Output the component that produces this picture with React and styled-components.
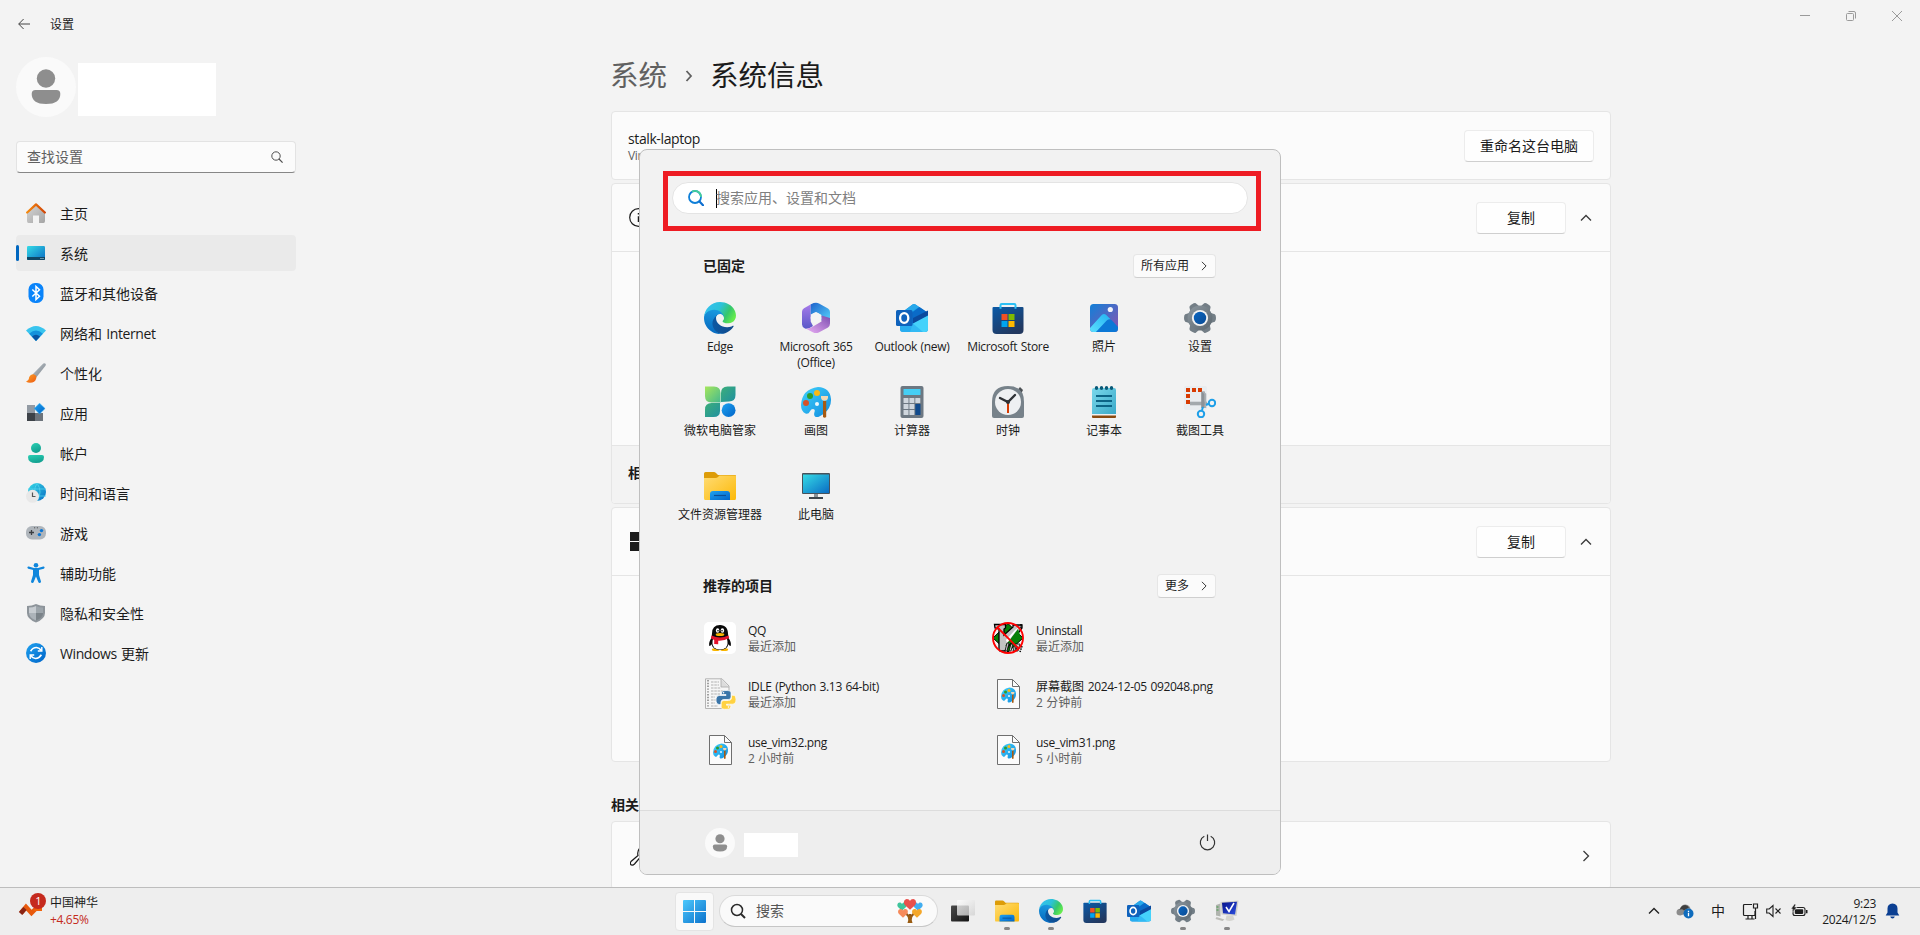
import React from "react";
import styled, { createGlobalStyle, css } from "styled-components";

const GlobalStyle = createGlobalStyle`
  * { box-sizing: border-box; }
  html, body { margin: 0; padding: 0; height: 100%; overflow: hidden; }
  body {
    background: #f3f3f3;
    color: #1b1b1b;
    font-family: "Open Sans", "Noto Sans CJK SC", sans-serif;
    font-size: 14px;
    line-height: 20px;
  }
  svg { display: block; flex: none; }
`;

/* ---------- text ---------- */

const Latin = styled.span`
  letter-spacing: -0.028em;
  word-spacing: 0.07em;
`;

function Mixed({ children }) {
  const runs = String(children).match(/[\x20-\x7e]+|[^\x20-\x7e]+/g) || [];
  return runs.map((run, i) =>
    /[\x20-\x7e]/.test(run[0]) ? <Latin key={i}>{run}</Latin> : run
  );
}

/* ---------- shared icons ---------- */

const Gradients = styled.svg`
  position: absolute;
`;

function Defs() {
  const g = (id, a, b, x1 = 0, y1 = 0, x2 = 1, y2 = 1) => (
    <linearGradient id={id} x1={x1} y1={y1} x2={x2} y2={y2}>
      <stop offset="0" stopColor={a} />
      <stop offset="1" stopColor={b} />
    </linearGradient>
  );
  return (
    <Gradients width="0" height="0">
      <defs>
        {g("edgeDark", "#0c59a4", "#114a8b", 0, 0, 1, 0)}
        {g("edgeMid", "#1b9de2", "#0669bf", 0.6, 0, 0.4, 1)}
        <linearGradient id="edgeTop" x1="0" y1="0.2" x2="1" y2="0.6">
          <stop offset="0" stopColor="#35c1f1" />
          <stop offset="0.45" stopColor="#2cc2d8" />
          <stop offset="0.75" stopColor="#36c76b" />
          <stop offset="1" stopColor="#66eb4e" />
        </linearGradient>
        {g("screen", "#35dbe6", "#0a6cc4")}
        {g("blue", "#1fa2f0", "#0064c8")}
        {g("folder", "#ffdc74", "#fcb908")}
        {g("store", "#0a5aa8", "#22385f", 0, 0, 0.6, 1)}
        {g("gear", "#8d98a0", "#5b666e")}
        {g("gearHub", "#0b66c0", "#0a4b95")}
        {g("orange", "#f58a10", "#d24606", 0, 0, 1, 0)}
        {g("brushTip", "#fba32a", "#ee5a10")}
        {g("grey", "#d6d6d6", "#a4a4a4")}
        {g("teal", "#2ad0b4", "#12a090", 0, 0, 0.4, 1)}
        {g("silver", "#bcc4cb", "#7d858c")}
        {g("win", "#4cc8fc", "#0c72cc")}
        {g("photo", "#1180d8", "#8a52b0")}
        {g("photoHill", "#5fe2ff", "#22b2f2", 0, 1, 1, 0)}
        {g("leafA", "#a6e65c", "#45b98e")}
        {g("leafB", "#3cae7a", "#2090a0")}
        {g("palette", "#42d2fa", "#0f8be0")}
        {g("mA", "#a77bea", "#5a58c8", 0, 0, 0, 1)}
        {g("mB", "#1d62cc", "#58d4fc", 0, 0, 1, 1)}
        {g("mC", "#ecb0f6", "#7c4db0", 0, 1, 1, 0)}
        {g("note", "#7ad8ec", "#3aa9c8")}
        {g("bgTask", "#4a4a4a", "#141414")}
        {g("fgTask", "#ffffff", "#d0d0d0")}
        {g("monitorXp", "#06128a", "#2c50e0")}
      </defs>
    </Gradients>
  );
}

const EdgeIcon = ({ size = 32 }) => (
  <svg width={size} height={size} viewBox="0 0 256 256">
    <path fill="url(#edgeDark)" d="M231.1 190.5c-3.4 1.8-6.9 3.4-10.5 4.7a101.8 101.8 0 0 1-35.9 6.5c-47.3 0-88.5-32.5-88.5-74.3.1-11.4 6.4-21.9 16.4-27.3-42.8 1.8-53.8 46.4-53.8 72.5 0 74 68.1 81.4 82.8 81.4 7.9 0 19.8-2.3 27-4.6l1.3-.4c27.6-9.5 51-28.1 66.6-52.8 1.2-1.9.6-4.3-1.2-5.5-1.3-.8-2.9-.9-4.2-.2z" />
    <path fill="url(#edgeMid)" d="M105.7 241.4c-8.9-5.5-16.6-12.8-22.7-21.3-26.3-36-18.4-86.5 17.6-112.8 3.8-2.7 7.7-5.2 11.9-7.2 3.1-1.5 8.4-4.1 15.5-4 10.1.1 19.6 4.9 25.7 13 4 5.4 6.3 11.9 6.4 18.7 0-.2 24.5-79.6-80-79.6-43.9 0-80 41.7-80 78.2-.2 19.3 4 38.5 12.1 56 27.6 58.8 94.8 87.6 156.4 67.1-21.1 6.6-44.1 3.7-62.9-8.1z" />
    <path fill="url(#edgeTop)" d="M152.3 148.9c-.9 1-3.4 2.5-3.4 5.6 0 2.6 1.7 5.1 4.7 7.2 14.3 10 41.4 8.6 41.5 8.6 10.7 0 21.1-2.9 30.3-8.3 18.8-11 30.4-31.1 30.4-52.9.3-22.4-8-37.3-11.3-43.9C223.5 23.9 177.7.2 128 .2 57.7.2.5 56.7 0 127c.5-36.5 36.8-66 80-66 3.5 0 23.5.3 42 10.1 16.3 8.6 24.9 18.9 30.8 29.2 6.2 10.7 7.3 24.1 7.3 29.5s-2.7 13.3-7.8 19.1z" />
  </svg>
);

const OfficeIcon = () => (
  <svg width="32" height="32" viewBox="0 0 32 32">
    <path fill="url(#mA)" d="M11 2.2 4 6.2Q2 7.400 2 9.800v12.600Q2 25 5 26.500q3 .8 6-1.200l2-1.300-2.300-4.600V3z" />
    <path fill="url(#mB)" d="M11 2.200Q16 -.3 19 1.600l9 5Q30 7.800 30 10v9.500l-8.500-1V13l-5.500-3-5.300 2.600V2.600z" />
    <path fill="url(#mC)" d="M30 16v5.600q0 2.600-2 3.800l-9.200 5q-2.800 1.300-5.600 0L5.600 26.600Q10 27 13 24.600l8.500-5.200V13.500L30 16z" />
    <circle cx="16" cy="16" r="5.400" fill="#f4f4f4" />
  </svg>
);

const OutlookIcon = ({ size = 32 }) => (
  <svg width={size} height={size} viewBox="0 0 32 32">
    <path d="M4 12 16.500 2.600q1.500-1 3 0L32 11v16q0 3-3 3H7q-3 0-3-3z" fill="#1593e4" />
    <path d="M5 11 16.500 2.600q1.500-1 3 0L23 5 10 14z" fill="#28a8ea" />
    <path d="M10 15 23.500 5l8 5.500L17 22z" fill="#0a6bc8" />
    <path d="M17 16 32 8.500V14L17 22z" fill="#0b4a9e" />
    <path d="M17 21.500 32 13.500V27q0 3-3 3H14z" fill="#45d2fb" />
    <path d="M4 23l13-1.500L27 30H7q-3 0-3-3z" fill="#2db4f2" opacity=".8" />
    <rect x="0" y="8" width="16.500" height="16" rx="1.500" fill="#0f62bc" />
    <ellipse cx="8.200" cy="16" rx="4.100" ry="4.800" fill="none" stroke="#fff" strokeWidth="2.300" />
  </svg>
);

const StoreIcon = ({ size = 32 }) => (
  <svg width={size} height={size} viewBox="0 0 32 32">
    <path d="M.500 6q0-1 1-1h29q1 0 1 1v22q0 4-4 4h-23q-4 0-4-4z" fill="url(#store)" />
    <path d="M8.500 6.800V3.200Q8.500 2 9.700 2h12.600q1.200 0 1.200 1.200v3.600" fill="none" stroke="#2cc0f4" strokeWidth="2" />
    <path d="M9.500 12h6v6h-6z" fill="#f25022" />
    <path d="M16.500 12h6v6h-6z" fill="#7fba00" />
    <path d="M9.500 19h6v6h-6z" fill="#00a4ef" />
    <path d="M16.500 19h6v6h-6z" fill="#ffb900" />
  </svg>
);

const PhotosIcon = () => (
  <svg width="32" height="32" viewBox="0 0 32 32">
    <clipPath id="photoClip"><rect x="2" y="2" width="28" height="28" rx="3.500" /></clipPath>
    <g clipPath="url(#photoClip)">
      <rect x="2" y="2" width="28" height="28" fill="url(#photo)" />
      <path d="M6 31 17 19.500l4-2.500q1.500-.5 3 1.500L31 26v6z" fill="#0c78d6" />
      <path d="M1 27 14 12.800q2-1.800 4 0l4.500 4.500q-2-.6-3.800 1.200L7 31H1z" fill="url(#photoHill)" />
    </g>
    <circle cx="22.300" cy="7.500" r="2.600" fill="#f0f2fa" />
  </svg>
);

const SettingsIcon = ({ size = 32 }) => (
  <svg width={size} height={size} viewBox="0 0 32 32">
    <g fill="#737e86">
      {[0, 60, 120, 180, 240, 300].map((a) => (
        <path key={a} transform={`rotate(${a} 16 16)`} d="M24 10l6.800 2.300q1.200.6 1.200 3.700t-1.200 3.700l-6.800 2.300z" />
      ))}
    </g>
    <circle cx="16" cy="16" r="12.400" fill="url(#gear)" />
    <circle cx="16" cy="16" r="8.100" fill="#f2f2f2" />
    <circle cx="16" cy="16" r="6.200" fill="url(#gearHub)" />
  </svg>
);

const PcManagerIcon = () => (
  <svg width="32" height="32" viewBox="0 0 32 32">
    <path d="M1 .500h9q6.500 0 6.500 6.500v9.500h-9Q1 16.500 1 10z" fill="url(#leafA)" />
    <path d="M17 16V7q0-6.500 6.500-6.500H31.500V9q0 6.500-6.500 6.500z" fill="url(#leafB)" />
    <path d="M16 17v8q0 6-6.500 6H1v-7.500Q1 17 7.500 17z" fill="url(#leafB)" />
    <circle cx="24.600" cy="24.200" r="6.900" fill="url(#blue)" />
  </svg>
);

const PaletteArt = () => (
  <>
    <path d="M18 1Q30 1.500 31 13q.5 9-7.500 15-6 4.500-8.500 2.500-1.500-1.200-.5-4.500 1-3-1.500-3-2 0-3 2.200-1.500 3.300-4.500 2.300Q1 25.500 1 19 2 3 18 1z" fill="url(#palette)" />
    <circle cx="6" cy="17" r="3" fill="#d65328" />
    <circle cx="10" cy="10" r="3" fill="#2e9e2c" />
    <circle cx="17" cy="7" r="3" fill="#fbb914" />
    <circle cx="17" cy="18" r="2" fill="#eaf8fe" />
    <path d="M23 15h3.200v16q-1.600 1.500-3.200 0z" fill="#a65a12" />
    <path d="M21 10h7q.5 4.800-3.500 4.800T21 10z" fill="#f1d8b4" />
  </>
);

const PaintIcon = () => (
  <svg width="32" height="32" viewBox="0 0 32 32"><PaletteArt /></svg>
);

const CalculatorIcon = () => (
  <svg width="32" height="32" viewBox="0 0 32 32">
    <rect x="4.500" y="0" width="23" height="32" rx="2" fill="#6d7882" />
    <rect x="7.500" y="3" width="17" height="6" rx=".6" fill="#45cff5" />
    {[7.5, 13.4, 19.3].map((x) =>
      [12, 18, 24].map((y) =>
        x > 19 && y > 12 ? null : (
          <rect key={`${x}-${y}`} x={x} y={y} width="5" height="5" rx=".6" fill="#cfd6dd" />
        )
      )
    )}
    <rect x="19.300" y="18" width="5.200" height="11" rx=".6" fill="#114a8c" />
  </svg>
);

const ClockIcon = () => (
  <svg width="32" height="32" viewBox="0 0 32 32">
    <path d="M26 3.500 28 1l3 3-1.500 3z" fill="#4b5054" />
    <path d="M0 16Q0 0 16 0t16 16v14q0 2-2 2H2q-2 0-2-2z" fill="#77828a" />
    <circle cx="16" cy="16" r="13" fill="#eef0f2" />
    <path d="M8 12l8 4 7-7" fill="none" stroke="#2e3236" strokeWidth="2.400" strokeLinecap="round" />
    <path d="M16 17v10" stroke="#d83b01" strokeWidth="2" />
    <circle cx="16" cy="16" r="2" fill="#2e3236" />
  </svg>
);

const NotepadIcon = () => (
  <svg width="32" height="32" viewBox="0 0 32 32">
    <path d="M4 29h24v2q0 1-1 1H5q-1 0-1-1z" fill="#8a4a10" />
    <path d="M4 26h24v3.500H4z" fill="#f0f0f0" />
    <path d="M4 4q0-2 2-2h20q2 0 2 2v24H4z" fill="url(#note)" />
    <g fill="#0b5a78">
      {[8.500, 13.500, 18.500, 23.500].map((x) => <ellipse key={x} cx={x} cy="2" rx="1.700" ry="2" />)}
    </g>
    <path d="M8 10h16M8 15h16M8 20h16" stroke="#0c6486" strokeWidth="1.800" />
  </svg>
);

const SnipIcon = () => (
  <svg width="32" height="32" viewBox="0 0 32 32">
    <rect x="0" y="0" width="23" height="24" rx="2" fill="#e9edf0" />
    <g fill="#d83b01">
      <path d="M2 2h4v4H2zM8 2h4v4H8zM14 2h4v4h-4zM2 8h4v4H2zM2 14h4v4H2z" />
    </g>
    <path d="M6 17.500h17" stroke="#a3a9ad" strokeWidth="3.600" />
    <path d="M19 5.500V22" stroke="#8c9297" strokeWidth="3.600" />
    <path d="M19 6l2.500 2v14" stroke="#a9afb3" strokeWidth="1.500" fill="none" />
    <path d="m22 19 3-1.500M19 21l-1 3" stroke="#1e9fe8" strokeWidth="2" />
    <circle cx="28" cy="17" r="3.200" fill="none" stroke="#1e9fe8" strokeWidth="2" />
    <circle cx="17" cy="28" r="3.200" fill="none" stroke="#1e9fe8" strokeWidth="2" />
  </svg>
);

const FolderIcon = ({ size = 32 }) => (
  <svg width={size} height={size} viewBox="0 0 32 32">
    <path d="M0 3.500Q0 2 1.500 2H10q1 0 2 1l2 2h17q1 0 1 1v6H0z" fill="#dd9c08" />
    <path d="M0 8h11.500q1.500 0 2.500-1l1.500-1.500H31q1 0 1 1V28q0 2-1 2H1q-1 0-1-2z" fill="url(#folder)" />
    <path d="M6 30v-6q0-3 3-3h14q3 0 3 3v6z" fill="url(#blue)" />
    <path d="M10 25.500h12" stroke="#0a4e96" strokeWidth="1.200" />
  </svg>
);

const ThisPcIcon = () => (
  <svg width="32" height="32" viewBox="0 0 32 32">
    <rect x="2" y="3" width="28" height="21" rx="1" fill="#47525c" />
    <rect x="3" y="4.500" width="26" height="18.500" fill="url(#screen)" />
    <path d="M14 24h4v3h-4z" fill="#8a9299" />
    <path d="M9 27h14v2H9z" fill="#3d464e" />
  </svg>
);

const QQIcon = () => (
  <svg width="32" height="32" viewBox="0 0 32 32">
    <rect width="32" height="32" rx="5" fill="#fff" />
    <ellipse cx="11.800" cy="27.500" rx="4" ry="1.600" fill="#f9b600" />
    <ellipse cx="20.200" cy="27.500" rx="4" ry="1.600" fill="#f9b600" />
    <path d="M16 3c5.500 0 8 4 8 8.500l.5 4.500q3 4 2.300 7.500-.7 1.500-2.300-1.200Q23 28 16 28T7.500 22.300q-1.600 2.700-2.300 1.200Q4.500 20 7.500 16L8 11.500Q8 3 16 3z" fill="#0a0a0a" />
    <path d="M9 17h14q1.500 5-1 8.200-2 2.300-6 2.300t-6-2.300Q7.500 22 9 17z" fill="#fff" />
    <path d="M7.600 13.500q8.400 4 16.800 0l.8 2.600q-5 3-11 2.600v3.500l-4-.3v-4l-3.300-1.600z" fill="#e4132c" />
    <ellipse cx="13.600" cy="8.500" rx="1.700" ry="2.300" fill="#fff" />
    <ellipse cx="18.400" cy="8.500" rx="1.700" ry="2.300" fill="#fff" />
    <circle cx="14" cy="8.800" r=".8" />
    <circle cx="18" cy="8.800" r=".8" />
    <ellipse cx="16" cy="12.600" rx="4.300" ry="1.500" fill="#f9b600" />
  </svg>
);

const UninstallIcon = () => (
  <svg width="32" height="32" viewBox="0 0 32 32">
    <path d="M16 1.500 31 16 16 30 1 16z" fill="#078007" stroke="#000" strokeWidth="1" />
    <path d="M2.500 2.500h11v3.500l-1.500 1v6L21 5V3h9v3L13 29H8l-1-2V7L3 6z" fill="#c3c3c3" stroke="#000" strokeWidth="1.300" />
    <path d="M26 7 13 24l16-8z" fill="#078007" />
    <path d="m14 18 9-10 4-3-12 16z" fill="#fff" />
    <path d="m15 21 2 0-2 8h-2zm4 1h2l-2 7h-2zm4 0h5l-2 7h-2l1-5h-1l-1 5h-2z" fill="#d0d0d0" stroke="#000" strokeWidth=".8" />
    <path d="M29 2v5M30 24l-2 6" stroke="#000" strokeWidth="1.500" strokeDasharray="1.500 1" />
    <circle cx="16" cy="16" r="15" fill="none" stroke="#f00" strokeWidth="1.900" />
    <path d="M5.500 5.500 27 27" stroke="#f00" strokeWidth="1.900" />
  </svg>
);

const PythonIcon = () => (
  <svg width="32" height="32" viewBox="0 0 32 32">
    <path d="M1.500.800H18L25 8v22.500H1.500z" fill="#f6f6f6" stroke="#b4b4b4" strokeWidth="1" />
    <path d="M17 .800V9h8" fill="#dcdcdc" stroke="#a8a8a8" strokeWidth=".8" />
    <path d="M4 2v28" stroke="#a0a0a0" strokeWidth="2" strokeDasharray="1.400 1.400" />
    <path d="M7 4h8M7 7h8M7 10h10M7 13h14M7 16h9M7 19h4M7 22h5M7 25h4M7 28h7" stroke="#b0b0b0" strokeWidth="1.200" strokeDasharray="2.500 .8" />
    <path d="M22 12.500c5 0 5 1.500 5 3v3c0 2-1 3-3 3h-4c-2 0-3 1.200-3 3v2h-1.500c-2.500 0-3.500-2-3.500-4.500s1-4.500 3.500-4.500H22v-1h-4.500v-1.500c0-1.700 1.500-2.500 4.500-2.500z" fill="#3a75a8" stroke="#fff" strokeWidth=".7" />
    <path d="M22 31.300c-5 0-4.800-1.500-4.800-3v-2.800c0-2 1-3 3-3h4.300c2 0 3-1.200 3-3v-2.300H29c2.200 0 3 2 3 4.500s-1 4.500-3.500 4.500h-6v1h4.300v1.500c0 1.700-1.500 2.600-4.800 2.600z" fill="#ffd242" stroke="#fff" strokeWidth=".7" />
    <circle cx="19.500" cy="14.800" r=".8" fill="#fff" />
    <circle cx="24.500" cy="29" r=".8" fill="#fff" />
  </svg>
);

const PngFileIcon = () => (
  <svg width="32" height="32" viewBox="0 0 32 32">
    <path d="M5 1.500h15.500l7 7V30.500h-22z" fill="#fbfbfb" />
    <path d="M5.500 1.500h15l7 7v22h-22z M20.500 1.500v7h7" fill="none" stroke="#6f6f6f" strokeWidth="1" />
    <g transform="translate(8.500 9) scale(.5)"><PaletteArt /></g>
  </svg>
);

const UserGlyph = ({ size }) => (
  <svg width={size} height={size} viewBox="0 0 60 60">
    <circle cx="30" cy="30" r="30" fill="#fafafa" />
    <circle cx="30" cy="21.500" r="9.200" fill="#8e8e8e" />
    <path d="M19.500 33h21q3.800 0 3.800 4 0 10-14.300 10T15.700 37q0-4 3.800-4z" fill="#8e8e8e" />
  </svg>
);

const Chevron = ({ dir = "up", size = 12, color = "#3a3a3a", weight = 1.3 }) => {
  const d = { up: "M1 8.500 6 3.500 11 8.500", right: "M3.500 1 8.500 6 3.500 11" }[dir];
  return (
    <svg width={size} height={size} viewBox="0 0 12 12">
      <path d={d} fill="none" stroke={color} strokeWidth={weight} />
    </svg>
  );
};

/* ---------- navigation icons ---------- */

const Nav20 = ({ children }) => (
  <svg width="20" height="20" viewBox="0 0 20 20">{children}</svg>
);

const navItems = [
  { label: "主页", icon: (
    <Nav20>
      <path d="M1 9 10 1.500 19 9v9q0 2-1.500 2H13v-7.500H7V20H2.500Q1 20 1 18z" fill="url(#grey)" />
      <path d="M1.200 9.500 10 1.400l8.800 8.100" fill="none" stroke="url(#orange)" strokeWidth="2.300" strokeLinecap="round" strokeLinejoin="round" />
    </Nav20>) },
  { label: "系统", active: true, icon: (
    <Nav20>
      <rect x="1" y="3" width="18" height="14" rx="1.200" fill="url(#screen)" />
      <path d="M1 14h18v2q0 1-1 1H2q-1 0-1-1z" fill="#0f4766" />
      <path d="M14.500 15.500h1m1 0h1" stroke="#bfe6f4" />
    </Nav20>) },
  { label: "蓝牙和其他设备", icon: (
    <Nav20>
      <rect x="2.500" y="0" width="15" height="20" rx="6.500" fill="#0a84fa" />
      <path d="m6.300 6.500 7.200 6.800L10 16.500v-13l3.500 3.200-7.200 6.800" fill="none" stroke="#fff" strokeWidth="1.500" />
    </Nav20>) },
  { label: "网络和 Internet", icon: (
    <Nav20>
      <path d="M0 7.500Q10-1.500 20 7.500L10 18z" fill="#38c4ee" />
      <path d="M3.200 10.700Q10 4.500 16.800 10.700L10 18z" fill="#1492dc" />
      <path d="M6 13.500Q10 10 14 13.500L10 18z" fill="#0a54a2" />
    </Nav20>) },
  { label: "个性化", icon: (
    <Nav20>
      <path d="M6.500 11.500 17.300.6q1.600-1 2.400.3.400.8-.4 2.100L10 14.800z" fill="url(#silver)" />
      <path d="M3.200 14q1.500-3.300 4.500-2.800 3.300 1 2.500 4.300-1.200 4.300-6.200 4.300-2.300 0-4-1.300Q3 17.500 3.200 14z" fill="url(#brushTip)" />
    </Nav20>) },
  { label: "应用", icon: (
    <Nav20>
      <path d="M1 2h8v8H1z" fill="#929aa3" />
      <path d="M1 10h8v8H1z" fill="#3d4248" />
      <path d="M9 10h8v8H9z" fill="#6d747c" />
      <path d="m13.500.200 5.600 5.400-5.600 5.400-5.300-5.400z" fill="url(#blue)" stroke="#38b4f8" strokeWidth=".5" />
    </Nav20>) },
  { label: "帐户", icon: (
    <Nav20>
      <circle cx="10" cy="5" r="5" fill="url(#teal)" />
      <path d="M4 12h12q2 0 2 2 0 6-8 6t-8-6q0-2 2-2z" fill="url(#teal)" />
    </Nav20>) },
  { label: "时间和语言", icon: (
    <Nav20>
      <circle cx="11" cy="9" r="9" fill="url(#screen)" />
      <path d="M2 6h18M3 13h17M11 0q-5 9 0 18M11 0q6 9 0 18" fill="none" stroke="#52d6ee" strokeWidth=".8" />
      <circle cx="6.500" cy="13.300" r="6.500" fill="#e8e8e8" />
      <path d="M6.500 9.500v4h3" fill="none" stroke="#555" strokeWidth="1.200" />
    </Nav20>) },
  { label: "游戏", icon: (
    <Nav20>
      <rect x="0" y="3" width="20" height="13.500" rx="6" fill="#afb5bb" />
      <path d="M3 9.500h5M5.500 7v5" stroke="#3a3e42" strokeWidth="1.300" />
      <path d="M8 4.800h1.200m1.600 0H12" stroke="#555" />
      <circle cx="15.500" cy="7.600" r="1.700" fill="#0c76d4" />
      <circle cx="13.400" cy="11.600" r="1.700" fill="#0c76d4" />
    </Nav20>) },
  { label: "辅助功能", icon: (
    <Nav20>
      <circle cx="10" cy="2.300" r="2.300" fill="#0f86dc" />
      <path d="M2.500 4.600 8.500 6.200h3l6-1.600" fill="none" stroke="#0f86dc" strokeWidth="2.200" strokeLinecap="round" />
      <path d="M7 6h6v6l2 6.500q0 1.600-1.400 1.500-1 0-1.300-1L10 13.500 7.700 19q-.3 1-1.300 1Q5 20.100 5 18.500L7 12z" fill="#0f86dc" />
    </Nav20>) },
  { label: "隐私和安全性", icon: (
    <Nav20>
      <path d="M10 1q4 2 9 2v7q0 6-9 9.500Q1 16 1 10V3q5 0 9-2z" fill="#8d949a" />
      <path d="M10 3q3 1.500 7 1.500V10H10z" fill="#9da5ab" />
      <path d="M10 3Q7 4.500 3 4.500V10h7z" fill="#c7ccd1" />
      <path d="M3 10h7v7.500Q3 14.500 3 10z" fill="#acb3b9" />
      <path d="M17 10h-7v7.500q7-3 7-7.500z" fill="#7b8389" />
    </Nav20>) },
  { label: "Windows 更新", icon: (
    <Nav20>
      <circle cx="10" cy="10" r="10" fill="url(#blue)" />
      <path d="M4.600 8.200Q7 4.400 10.500 4.500q3 .2 4.800 3M15.400 11.800Q13 15.600 9.500 15.500q-3-.2-4.800-3" fill="none" stroke="#fff" strokeWidth="1.600" />
      <path d="M15.800 4v4h-4M4.200 16v-4h4" fill="none" stroke="#fff" strokeWidth="1.400" />
    </Nav20>) },
];

/* ---------- settings window ---------- */

const Screen = styled.div`
  position: relative;
  display: flex;
  flex-direction: column;
  width: 1920px;
  height: 935px;
  overflow: hidden;
`;

const SettingsWindow = styled.div`
  display: flex;
  height: 887px;
  overflow: hidden;
  background: #f3f3f3;
`;

const Sidebar = styled.aside`
  width: 312px;
  padding: 14px 16px 0;
  flex: none;
`;

const TitleBar = styled.div`
  display: flex;
  align-items: center;
  gap: 20px;
  height: 20px;
  padding-left: 2px;
  font-size: 12px;
  span { padding-top: 2px; }
`;

const Profile = styled.div`
  display: flex;
  align-items: center;
  gap: 2px;
  margin-top: 23px;
  height: 60px;
`;

const Redacted = styled.div`
  background: #fff;
  width: ${(p) => p.$w}px;
  height: ${(p) => p.$h}px;
  margin: ${(p) => p.$m || 0};
`;

const SettingsSearch = styled.div`
  display: flex;
  align-items: center;
  justify-content: space-between;
  height: 32px;
  margin-top: 24px;
  padding: 0 12px 0 10px;
  background: #fbfbfb;
  border: 1px solid #e3e3e3;
  border-bottom: 1px solid #868686;
  border-radius: 4px;
  color: #606060;
`;

const NavList = styled.nav`
  display: flex;
  flex-direction: column;
  gap: 4px;
  margin-top: 22px;
`;

const NavItem = styled.div`
  position: relative;
  display: flex;
  align-items: center;
  gap: 14px;
  height: 36px;
  padding-left: 10px;
  border-radius: 4px;
  span { padding-top: 1px; }
  ${(p) => p.$active && css`
    background: #eaeaea;
    &::before {
      content: "";
      position: absolute;
      left: 0;
      top: 10px;
      width: 3px;
      height: 16px;
      border-radius: 2px;
      background: #0067c0;
    }
  `}
`;

const Content = styled.main`
  width: 1000px;
  margin-left: 299px;
  padding-top: 56px;
  flex: none;
`;

const Breadcrumb = styled.h1`
  display: flex;
  align-items: center;
  margin: 0 0 17px -1px;
  height: 38px;
  font-size: 28.5px;
  font-weight: 400;
  line-height: 38px;
  svg { margin: 2px 16px 0 17px; }
`;

const Crumb = styled.span`
  color: #606060;
`;

const Card = styled.section`
  border: 1px solid #e5e5e5;
  border-radius: 4px;
  background: #fbfbfb;
  margin-bottom: 3px;
  overflow: hidden;
`;

const CardHeader = styled.div`
  display: flex;
  align-items: center;
  height: 67px;
  padding: 0 18px 0 16px;
`;

const CardIcon = styled.div`
  flex: 1;
  padding-left: ${(p) => p.$pl ?? 2}px;
`;

const DeviceName = styled.div`
  flex: 1;
  padding-top: 2px;
  line-height: 18px;
`;

const Caption = styled.div`
  font-size: 12px;
  line-height: 16px;
  color: #606060;
`;

const Button = styled.button`
  width: ${(p) => p.$w}px;
  height: 32px;
  padding: 0;
  font: inherit;
  color: inherit;
  background: #fefefe;
  border: 1px solid #ececec;
  border-bottom-color: #cfcfcf;
  border-radius: 4px;
  margin-right: ${(p) => p.$mr || 0}px;
`;

const CardBody = styled.div`
  height: ${(p) => p.$h}px;
  border-top: 1px solid #e5e5e5;
`;

const RelatedRow = styled.div`
  display: flex;
  align-items: center;
  height: 58px;
  padding: 0 0 4px 16px;
  border-top: 1px solid #e5e5e5;
  background: #f3f3f3;
  font-weight: 700;
`;

const SectionTitle = styled.h2`
  margin: 32px 0 6px;
  height: 21px;
  font-size: 14px;
  line-height: 21px;
  font-weight: 700;
`;

const WindowControls = styled.div`
  display: flex;
  gap: 36px;
  margin: 11px 18px 0 auto;
`;

function Settings() {
  return (
    <SettingsWindow>
      <Sidebar>
        <TitleBar>
          <svg width="12" height="12" viewBox="0 0 12 12">
            <path d="M12 6H.800M5.600 1 .700 6l4.900 5" fill="none" stroke="#444" strokeWidth="1" />
          </svg>
          <span>设置</span>
        </TitleBar>
        <Profile>
          <UserGlyph size={60} />
          <Redacted $w={138} $h={53} $m="5px 0 0" />
        </Profile>
        <SettingsSearch>
          查找设置
          <svg width="12" height="12" viewBox="0 0 12 12">
            <circle cx="5" cy="5" r="4.200" fill="none" stroke="#505050" />
            <path d="m8 8 3.600 3.600" stroke="#505050" strokeWidth="1.200" />
          </svg>
        </SettingsSearch>
        <NavList>
          {navItems.map((n) => (
            <NavItem key={n.label} $active={n.active}>
              {n.icon}
              <span><Mixed>{n.label}</Mixed></span>
            </NavItem>
          ))}
        </NavList>
      </Sidebar>
      <Content>
        <Breadcrumb>
          <Crumb>系统</Crumb>
          <svg width="10" height="12" viewBox="0 0 10 12">
            <path d="m2.500 1 4.500 5-4.500 5" fill="none" stroke="#606060" strokeWidth="1.800" />
          </svg>
          系统信息
        </Breadcrumb>
        <Card>
          <CardHeader>
            <DeviceName>
              <Mixed>stalk-laptop</Mixed>
              <Caption><Mixed>VirtualBox</Mixed></Caption>
            </DeviceName>
            <Button $w={130} $mr={-2}>重命名这台电脑</Button>
          </CardHeader>
        </Card>
        <Card>
          <CardHeader>
            <CardIcon $pl={1}>
              <svg width="19" height="19" viewBox="0 0 19 19">
                <circle cx="9.500" cy="9.500" r="8.800" fill="none" stroke="#1b1b1b" strokeWidth="1.200" />
                <path d="M9.500 5v1.500m0 1.800V14" stroke="#1b1b1b" strokeWidth="1.500" />
              </svg>
            </CardIcon>
            <Button $w={90} $mr={14}>复制</Button>
            <Chevron />
          </CardHeader>
          <CardBody $h={194} />
          <RelatedRow>相关链接</RelatedRow>
        </Card>
        <Card>
          <CardHeader>
            <CardIcon>
              <svg width="19" height="19" viewBox="0 0 19 19">
                <path d="M0 0h9v9H0zM10 0h9v9h-9zM0 10h9v9H0zM10 10h9v9h-9z" fill="#1b1b1b" />
              </svg>
            </CardIcon>
            <Button $w={90} $mr={14}>复制</Button>
            <Chevron />
          </CardHeader>
          <CardBody $h={186} />
        </Card>
        <SectionTitle>相关设置</SectionTitle>
        <Card>
          <CardHeader>
            <CardIcon>
              <svg width="20" height="20" viewBox="0 0 20 20">
                <path d="M8 9.500 1 15.500q-1.500 2.500.5 3.500 1.500.6 3-1L10.500 11q4.500 1.500 7.500-1.800 2-2.700 1-6l-4 3.300-2.500-2.500L16 .800Q12 0 9.500 2.500 7 5.500 8 9.500z" fill="none" stroke="#1b1b1b" strokeWidth="1.200" />
              </svg>
            </CardIcon>
            <Chevron dir="right" />
          </CardHeader>
        </Card>
      </Content>
      <WindowControls>
        <svg width="10" height="10" viewBox="0 0 10 10"><path d="M0 4.500h10" stroke="#9a9a9a" /></svg>
        <svg width="10" height="10" viewBox="0 0 10 10">
          <rect x=".5" y="2.500" width="7" height="7" rx="1" fill="none" stroke="#9a9a9a" />
          <path d="M2.500.500H8q1.500 0 1.500 1.500v5.500" fill="none" stroke="#9a9a9a" />
        </svg>
        <svg width="10" height="10" viewBox="0 0 10 10"><path d="m0 0 10 10M10 0 0 10" stroke="#9a9a9a" /></svg>
      </WindowControls>
    </SettingsWindow>
  );
}

/* ---------- start menu ---------- */

const StartMenu = styled.div`
  position: absolute;
  left: 639px;
  top: 149px;
  display: flex;
  flex-direction: column;
  width: 642px;
  height: 726px;
  border: 1px solid #bfbfbf;
  border-radius: 8px;
  background: #f2f2f2;
  overflow: hidden;
`;

const SearchHighlight = styled.div`
  flex: none;
  width: 598px;
  height: 60px;
  margin: 21px 0 0 23px;
  padding: 6px 8px 0 4px;
  border: 5px solid #ee1c23;
`;

const StartSearch = styled.div`
  display: flex;
  align-items: center;
  height: 32px;
  padding: 0 15px;
  border: 1px solid #e4e4e4;
  border-radius: 16px;
  background: #fff;
  color: #808080;
`;

const Caret = styled.span`
  width: 1px;
  height: 19px;
  margin: 0 -1px 0 12px;
  background: #000;
`;

const SectionBar = styled.div`
  display: flex;
  align-items: center;
  justify-content: space-between;
  height: 24px;
  margin: ${(p) => p.$m};
  font-weight: 700;
`;

const SmallButton = styled.button`
  display: flex;
  align-items: center;
  gap: 10px;
  height: 24px;
  padding: 0 6px 0 7px;
  font: inherit;
  font-size: 12px;
  font-weight: 400;
  color: inherit;
  background: #fbfbfb;
  border: 1px solid #e6e6e6;
  border-bottom-color: #cfcfcf;
  border-radius: 4px;
`;

const AppGrid = styled.div`
  display: grid;
  grid-template-columns: repeat(6, 96px);
  grid-auto-rows: 84px;
  margin: 14px 0 0 32px;
`;

const AppTile = styled.div`
  display: flex;
  flex-direction: column;
  align-items: center;
  padding-top: 10px;
  font-size: 12px;
  line-height: 16px;
  text-align: center;
  white-space: pre-line;
`;

const AppLabel = styled.div`
  margin-top: 5px;
`;

const RecentGrid = styled.div`
  display: grid;
  grid-template-columns: 288px 288px;
  grid-auto-rows: 56px;
  margin: 12px 0 0 64px;
`;

const RecentItem = styled.div`
  display: flex;
  align-items: center;
  gap: 12px;
  font-size: 12px;
  line-height: 16px;
  white-space: nowrap;
`;

const RecentText = styled.div`
  padding-top: 2px;
`;

const StartFooter = styled.div`
  display: flex;
  align-items: center;
  height: 64px;
  margin-top: auto;
  padding: 0 64px 0 65px;
  border-top: 1px solid #dcdcdc;
  background: #eeeeee;
  svg:last-child { margin-left: auto; }
`;

const apps = [
  ["Edge", <EdgeIcon />],
  ["Microsoft 365\n(Office)", <OfficeIcon />],
  ["Outlook (new)", <OutlookIcon />],
  ["Microsoft Store", <StoreIcon />],
  ["照片", <PhotosIcon />],
  ["设置", <SettingsIcon />],
  ["微软电脑管家", <PcManagerIcon />],
  ["画图", <PaintIcon />],
  ["计算器", <CalculatorIcon />],
  ["时钟", <ClockIcon />],
  ["记事本", <NotepadIcon />],
  ["截图工具", <SnipIcon />],
  ["文件资源管理器", <FolderIcon />],
  ["此电脑", <ThisPcIcon />],
];

const recents = [
  ["QQ", "最近添加", <QQIcon />],
  ["Uninstall", "最近添加", <UninstallIcon />],
  ["IDLE (Python 3.13 64-bit)", "最近添加", <PythonIcon />],
  ["屏幕截图 2024-12-05 092048.png", "2 分钟前", <PngFileIcon />],
  ["use_vim32.png", "2 小时前", <PngFileIcon />],
  ["use_vim31.png", "5 小时前", <PngFileIcon />],
];

function Start() {
  return (
    <StartMenu>
      <SearchHighlight>
        <StartSearch>
          <svg width="16" height="16" viewBox="0 0 16 16">
            <circle cx="7" cy="7" r="6" fill="none" stroke="#0f7fd8" strokeWidth="1.800" />
            <path d="M4 1.800A6 6 0 0 1 13 7" fill="none" stroke="#45cf9a" strokeWidth="1.800" />
            <path d="m11.500 11.500 3.500 3.700" stroke="#0f6fd0" strokeWidth="2.200" strokeLinecap="round" />
          </svg>
          <Caret />
          搜索应用、设置和文档
        </StartSearch>
      </SearchHighlight>
      <SectionBar $m="23px 64px 0 63px">
        已固定
        <SmallButton>所有应用 <Chevron dir="right" size={10} weight={1.2} /></SmallButton>
      </SectionBar>
      <AppGrid>
        {apps.map(([name, icon]) => (
          <AppTile key={name}>
            {icon}
            <AppLabel>
              {name.split("\n").map((line) => <div key={line}><Mixed>{line}</Mixed></div>)}
            </AppLabel>
          </AppTile>
        ))}
      </AppGrid>
      <SectionBar $m="30px 64px 0 63px">
        推荐的项目
        <SmallButton>更多 <Chevron dir="right" size={10} weight={1.2} /></SmallButton>
      </SectionBar>
      <RecentGrid>
        {recents.map(([name, when, icon]) => (
          <RecentItem key={name}>
            {icon}
            <RecentText>
              <Mixed>{name}</Mixed>
              <Caption><Mixed>{when}</Mixed></Caption>
            </RecentText>
          </RecentItem>
        ))}
      </RecentGrid>
      <StartFooter>
        <UserGlyph size={30} />
        <Redacted $w={54} $h={24} $m="4px 0 0 9px" />
        <svg width="17" height="17" viewBox="0 0 17 17">
          <path d="M5.300 2.200a7.200 7.200 0 1 0 6.400 0" fill="none" stroke="#333" strokeWidth="1.200" />
          <path d="M8.500.500v6.500" stroke="#333" strokeWidth="1.200" />
        </svg>
      </StartFooter>
    </StartMenu>
  );
}

/* ---------- taskbar ---------- */

const Bar = styled.footer`
  display: flex;
  height: 48px;
  border-top: 1px solid #bdbdbd;
  background: #eeeeee;
`;

const Widget = styled.div`
  display: flex;
  width: 675px;
  padding: 4px 0 0 18px;
  gap: 4px;
  font-size: 12px;
  line-height: 17px;
`;

const Quote = styled.div`
  padding-top: 2px;
`;

const Gain = styled.div`
  color: #c42b1c;
`;

const StartButton = styled.div`
  display: grid;
  place-items: center;
  width: 39px;
  height: 39px;
  margin-top: 4px;
  border: 1px solid #e4e4e4;
  border-radius: 4px;
  background: #f9f9f9;
`;

const TaskSearch = styled.div`
  display: flex;
  align-items: center;
  width: 219px;
  height: 32px;
  margin: 7px 3px 0 5px;
  padding: 0 14px 0 10px;
  border: 1px solid #dadada;
  border-bottom-color: #c6c6c6;
  border-radius: 16px;
  background: #fafafa;
  color: #555;
  span { flex: 1; margin-left: 10px; }
`;

const TaskIcon = styled.div`
  position: relative;
  display: grid;
  place-items: center;
  width: 44px;
  height: 46px;
  ${(p) => p.$running && css`
    &::after {
      content: "";
      position: absolute;
      left: 19px;
      bottom: 4px;
      width: 6px;
      height: 3px;
      border-radius: 2px;
      background: #868686;
    }
  `}
`;

const Tray = styled.div`
  display: flex;
  align-items: center;
  height: 46px;
  margin-left: auto;
  padding-right: 20px;
`;

const TraySlot = styled.div`
  width: ${(p) => p.$w}px;
  display: flex;
  justify-content: center;
`;

const Clock = styled.div`
  width: 64px;
  padding-top: 1px;
  font-size: 12px;
  line-height: 16px;
  text-align: right;
  margin-right: 9px;
`;

function Taskbar() {
  return (
    <Bar>
      <Widget>
        <svg width="28" height="26" viewBox="0 0 28 26">
          <path d="m3 21 5-6 5.500 6 5-5" fill="none" stroke="#e8590c" strokeWidth="4.500" />
          <path d="M2.500 21.500 7 16.500" stroke="#8a2414" strokeWidth="4.500" />
          <path d="M15 19h9v-9z" fill="#f0640c" />
          <circle cx="20" cy="9" r="8" fill="#c52a1e" />
          <text x="20.500" y="13" fill="#fff" fontSize="11" textAnchor="middle">1</text>
        </svg>
        <Quote>
          中国神华
          <Gain><Mixed>+4.65%</Mixed></Gain>
        </Quote>
      </Widget>
      <StartButton>
        <svg width="23" height="23" viewBox="0 0 23 23">
          <path d="M0 1q0-1 1-1h10v11H0zM12 0h10q1 0 1 1v10H12zM0 12h11v11H1q-1 0-1-1zM12 12h11v10q0 1-1 1H12z" fill="url(#win)" />
        </svg>
      </StartButton>
      <TaskSearch>
        <svg width="16" height="16" viewBox="0 0 16 16">
          <circle cx="7" cy="7" r="5.500" fill="none" stroke="#2a2a2a" strokeWidth="1.500" />
          <path d="m11 11 4 4" stroke="#2a2a2a" strokeWidth="2" />
        </svg>
        <span>搜索</span>
        <svg width="26" height="26" viewBox="0 0 26 26">
          <path d="M13 24v-8M7.500 14l5 5M18.500 14l-5 5" stroke="#8f5516" strokeWidth="2.200" />
          <path d="M10.500 25q1.500-3 0-7h5q-1.500 4 0 7z" fill="#9a5c12" />
          {[[5, 8.3, "#3fc49c", 1], [21, 8.3, "#42aef0", 1], [6, 15, "#f68a5a", 1.05], [20, 15, "#f4a72a", 1.05], [13, 6, "#e8504c", 1.3]].map(([x, y, c, s]) => (
            <path key={c} transform={`translate(${x} ${y}) scale(${s})`} d="M0 4.500-3.800 1C-5.500-.8-4.500-3.800-2.400-3.800-1.200-3.800-.4-3.200 0-2.300.4-3.200 1.200-3.800 2.400-3.800 4.500-3.800 5.500-.8 3.800 1z" fill={c} />
          ))}
        </svg>
      </TaskSearch>
      <TaskIcon>
        <svg width="24" height="24" viewBox="0 0 24 24">
          <rect x="0" y="6.500" width="18" height="16" rx="1" fill="url(#bgTask)" />
          <rect x="6" y="1" width="18" height="15.500" rx="1" fill="url(#fgTask)" opacity=".78" />
        </svg>
      </TaskIcon>
      <TaskIcon $running><FolderIcon size={24} /></TaskIcon>
      <TaskIcon $running><EdgeIcon size={24} /></TaskIcon>
      <TaskIcon><StoreIcon size={24} /></TaskIcon>
      <TaskIcon><OutlookIcon size={24} /></TaskIcon>
      <TaskIcon $running><SettingsIcon size={24} /></TaskIcon>
      <TaskIcon $running>
        <svg width="24" height="24" viewBox="0 0 24 24">
          <path d="M1 6 5.500 4.500v13l-4.500-1z" fill="#b0b4ae" />
          <path d="M1.500 8h2M1.500 11h2" stroke="#3f9c44" />
          <path d="M5.500 3 23.500 1.500 21.500 17l-15-1.500z" fill="#cfcfca" />
          <path d="M7 3.800 22 2.800l-2 12.700-12-1.300z" fill="url(#monitorXp)" />
          <path d="m11 8 3 4.500 5-8.500" fill="none" stroke="#fff" strokeWidth="1.500" />
          <path d="M11.500 16.500h6.500l1.500 4q-4 2.500-9 .5z" fill="#d4d4cf" />
          <path d="m1.500 18 8 2.500-2 1.500-7-2z" fill="#bdbdb8" />
        </svg>
      </TaskIcon>
      <Tray>
        <TraySlot $w={36}><Chevron weight={1.400} color="#222" /></TraySlot>
        <TraySlot $w={26}>
          <svg width="18" height="16" viewBox="0 0 18 16">
            <path d="M4.500 12.500Q.500 12.500.500 9.200q.2-3 3.500-3.400Q5.500 1.500 9.500 1.500q4.500.5 5 4.500v3z" fill="#8c8c8c" />
            <path d="M3 7q3-1.500 5 .5l5-3Q11 1 7 2.400 4.500 3.800 4 6z" fill="#3f3f3f" />
            <circle cx="12.500" cy="10.500" r="5" fill="#0f6cbd" />
            <path d="M12.500 9.800v3.500m0-5.600V9" stroke="#fff" strokeWidth="1.300" />
          </svg>
        </TraySlot>
        <TraySlot $w={40}>中</TraySlot>
        <TraySlot $w={24}>
          <svg width="17" height="17" viewBox="0 0 17 17">
            <path d="M10 1.500H2.500q-1 0-1 1v9q0 1 1 1H12q1 0 1-1V8M3.500 16h9M6 12.500V16m4-3.500V16M11.500 1h4v4h-4zM13.500 5v11" fill="none" stroke="#1f1f1f" strokeWidth="1.200" />
          </svg>
        </TraySlot>
        <TraySlot $w={24}>
          <svg width="16" height="14" viewBox="0 0 16 14">
            <path d="M.700 5h2.500L7 1.500v11L3.200 9H.700z" fill="none" stroke="#1f1f1f" strokeWidth="1.100" />
            <path d="m9.500 4.500 5 5m0-5-5 5" stroke="#1f1f1f" strokeWidth="1.100" />
          </svg>
        </TraySlot>
        <TraySlot $w={26}>
          <svg width="17" height="14" viewBox="0 0 17 14">
            <rect x="2" y="3.500" width="12" height="8" rx="2" fill="none" stroke="#1f1f1f" strokeWidth="1.100" />
            <rect x="3.800" y="5.200" width="8.400" height="4.700" rx=".8" fill="#1f1f1f" />
            <path d="M15 6h1.500v3.200H15z" fill="#1f1f1f" />
            <path d="M3.500 0 0 5h2L1.200 8.500 6 3.200H3.700L4.800.500z" fill="#1f1f1f" stroke="#eee" strokeWidth=".5" />
          </svg>
        </TraySlot>
        <Clock>
          <div><Mixed>9:23</Mixed></div>
          <div><Mixed>2024/12/5</Mixed></div>
        </Clock>
        <svg width="15" height="16" viewBox="0 0 15 16">
          <path d="M7.500.500q5 .3 5 5v4l1.800 3H.700l1.800-3v-4q0-4.700 5-5z" fill="#0b3f92" />
          <path d="M5.200 13.500h4.600q-.5 2-2.300 2t-2.300-2z" fill="#0b3f92" />
        </svg>
      </Tray>
    </Bar>
  );
}

export default function App() {
  return (
    <Screen>
      <GlobalStyle />
      <Defs />
      <Settings />
      <Taskbar />
      <Start />
    </Screen>
  );
}
